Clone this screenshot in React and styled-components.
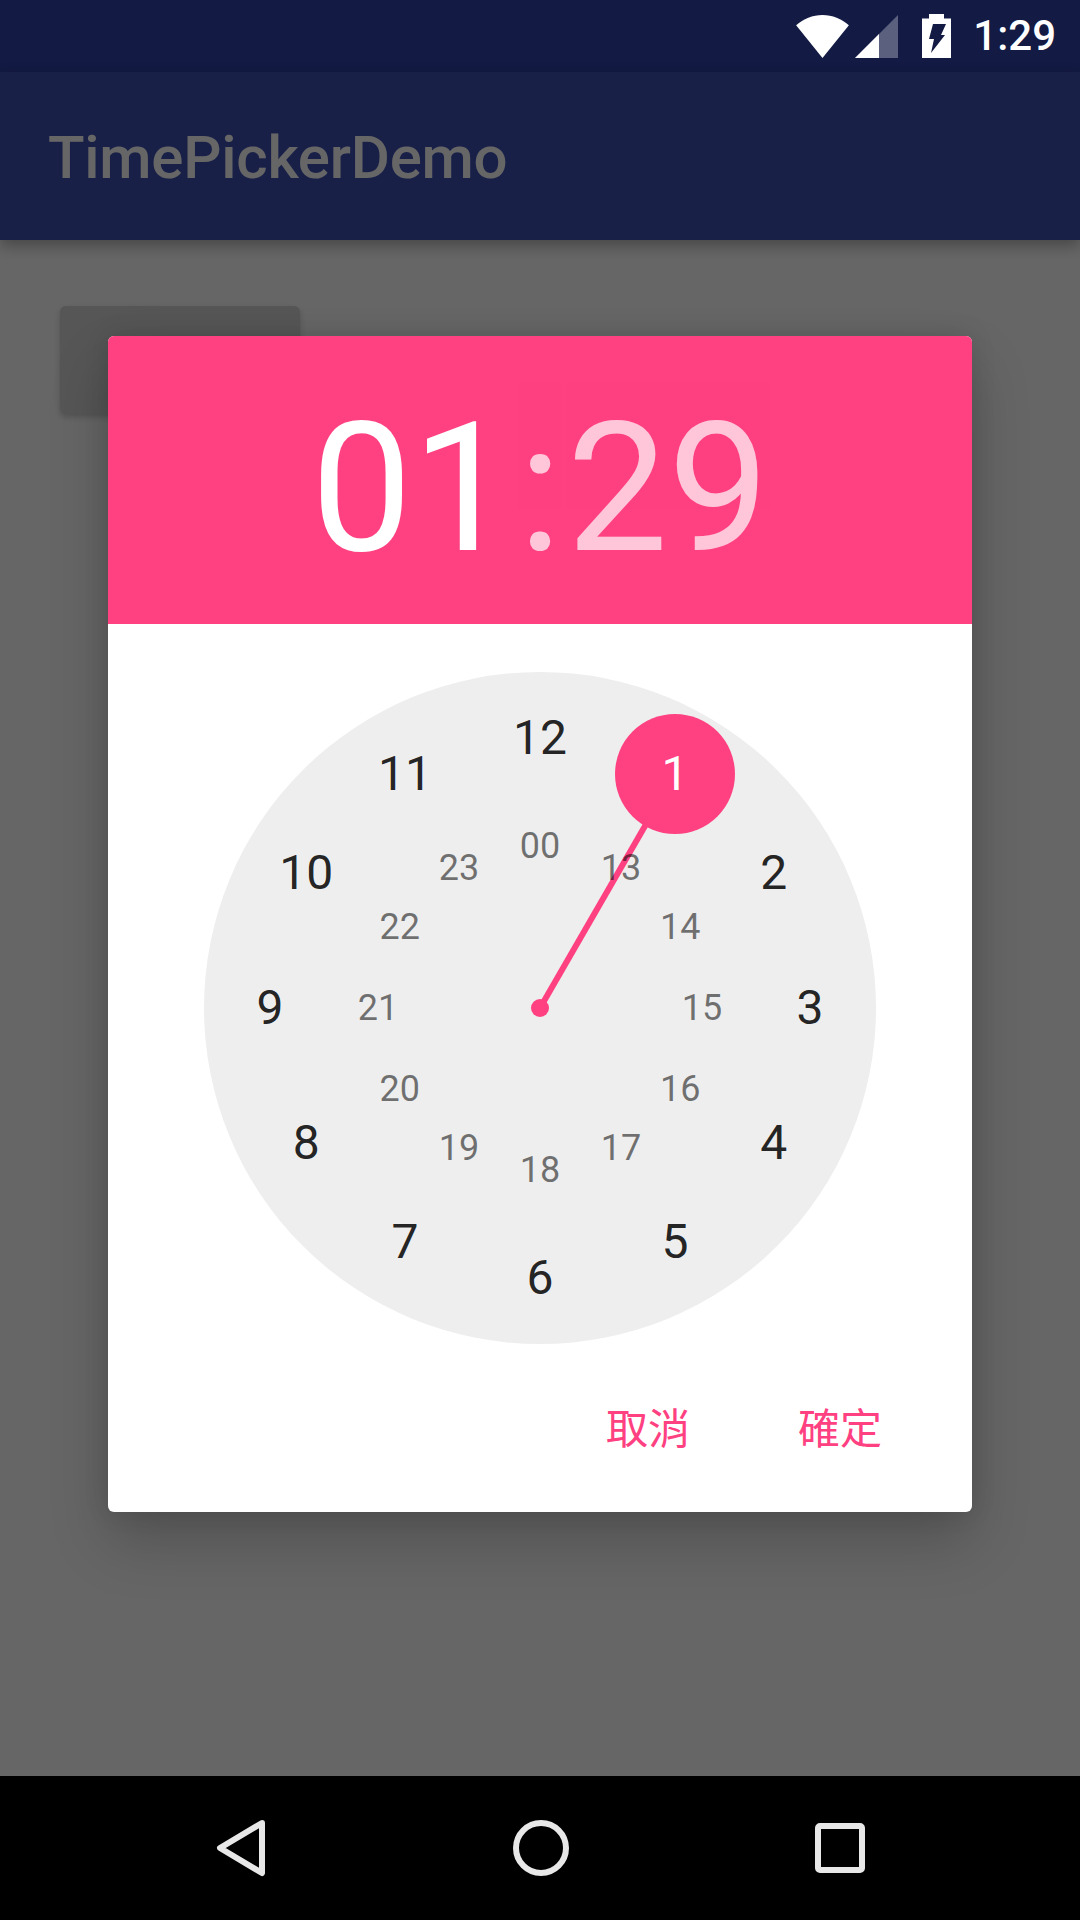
import styled, { createGlobalStyle } from "styled-components";

const PINK = "#ff4081";
const DIAL_SIZE = 672;
const CENTER = DIAL_SIZE / 2;

const outerHours = [12, 1, 2, 3, 4, 5, 6, 7, 8, 9, 10, 11];
const innerHours = ["00", 13, 14, 15, 16, 17, 18, 19, 20, 21, 22, 23];

// position of a number on the dial, index 0 is at twelve o'clock
const polar = (index, radius) => {
  const angle = (index * Math.PI) / 6;
  return {
    left: CENTER + radius * Math.sin(angle),
    top: CENTER - radius * Math.cos(angle),
  };
};

const GlobalStyle = createGlobalStyle`
  html, body {
    margin: 0;
    padding: 0;
    background: #000;
  }
  * {
    box-sizing: border-box;
  }
`;

const Screen = styled.div`
  width: 1080px;
  height: 1920px;
  display: flex;
  flex-direction: column;
  overflow: hidden;
  font-family: Roboto, "Noto Sans CJK TC", sans-serif;
`;

const StatusBar = styled.div`
  height: 72px;
  flex: none;
  display: flex;
  align-items: center;
  justify-content: flex-end;
  padding-right: 24px;
  background: #131a43;
  color: #fff;
`;

const StatusTime = styled.span`
  font-size: 42px;
  font-weight: 500;
  line-height: 1;
  margin-left: 22px;
  margin-top: -1px;
`;

const StatusIcon = styled.svg`
  display: block;
  flex: none;
  margin-left: ${(p) => p.$gap || 0}px;
`;

const Main = styled.div`
  position: relative;
  flex: 1;
  display: flex;
  flex-direction: column;
  background: #fff;
`;

const AppBar = styled.header`
  height: 168px;
  flex: none;
  display: flex;
  align-items: center;
  padding: 2px 0 0 48px;
  background: #3f51b5;
  color: #fff;
  font-size: 60px;
  font-weight: 500;
  letter-spacing: -0.25px;
  box-shadow: 0 6px 14px rgba(0, 0, 0, 0.3);
`;

const Content = styled.div`
  flex: 1;
  padding: 66px 60px;
`;

const GhostButton = styled.div`
  width: 240px;
  height: 108px;
  border-radius: 6px;
  background: #d6d6d6;
  box-shadow: 0 3px 6px rgba(0, 0, 0, 0.2);
`;

const Scrim = styled.div`
  position: absolute;
  inset: 0;
  display: flex;
  align-items: center;
  justify-content: center;
  background: rgba(0, 0, 0, 0.6);
`;

const Dialog = styled.div`
  width: 864px;
  height: 1176px;
  border-radius: 6px;
  overflow: hidden;
  background: #fff;
  box-shadow: 0 30px 60px rgba(0, 0, 0, 0.2), 0 0 24px rgba(0, 0, 0, 0.12);
  display: flex;
  flex-direction: column;
`;

const Header = styled.div`
  height: 288px;
  flex: none;
  display: flex;
  align-items: center;
  justify-content: center;
  padding-top: 17px;
  background: ${PINK};
  color: #fff;
  font-size: 180px;
  line-height: 1;
`;

const TimePart = styled.span`
  opacity: ${(p) => (p.$active ? 1 : 0.7)};
`;

const Colon = styled(TimePart)`
  margin: 0 5px;
`;

const DialWrap = styled.div`
  flex: none;
  display: flex;
  justify-content: center;
  padding-top: 48px;
`;

const Dial = styled.div`
  position: relative;
  width: ${DIAL_SIZE}px;
  height: ${DIAL_SIZE}px;
  border-radius: 50%;
  background: #eee;
`;

const Hand = styled.svg`
  position: absolute;
  inset: 0;
`;

const Num = styled.span`
  position: absolute;
  transform: translate(-50%, -50%);
  line-height: 1;
  font-size: ${(p) => (p.$inner ? 36 : 48)}px;
  color: ${(p) =>
    p.$selected ? "#fff" : p.$inner ? "rgba(0, 0, 0, 0.54)" : "rgba(0, 0, 0, 0.87)"};
`;

const Actions = styled.div`
  flex: 1;
  display: flex;
  align-items: center;
  justify-content: flex-end;
  gap: 108px;
  padding: 4px 90px 0 0;
`;

const ActionText = styled.span`
  color: ${PINK};
  font-size: 42px;
  line-height: 1;
`;

const NavBar = styled.nav`
  height: 144px;
  flex: none;
  display: flex;
  align-items: center;
  justify-content: space-between;
  padding: 0 215px 0 216px;
  background: #000;
`;

const NavIcon = styled.svg`
  display: block;
  fill: none;
  stroke: #e8e8e8;
  stroke-width: 6;
  stroke-linejoin: round;
`;

const App = () => {
  return (
    <Screen>
      <GlobalStyle />
      <StatusBar>
        <StatusIcon width="53" height="43" viewBox="0 0 54 44">
          <path d="M0 10.5C7.5 3.8 16.8 0 27 0s19.500 3.800 27 10.500L27 44z" fill="#fff" />
        </StatusIcon>
        <StatusIcon $gap={6} width="43" height="43" viewBox="0 0 43 43">
          <path d="M0 43L43 0v43z" fill="#5c607f" />
          <path d="M0 43L24 19v24z" fill="#fff" />
        </StatusIcon>
        <StatusIcon $gap={24} width="29" height="44" viewBox="0 0 29 44">
          <path
            d="M7 0h15v4.500h7V44H0V4.500h7z"
            fill="#fff"
          />
          <path d="M11 10h13l-5 11h4L9 39l3-14H7z" fill="#131a43" />
        </StatusIcon>
        <StatusTime>1:29</StatusTime>
      </StatusBar>

      <Main>
        <AppBar>TimePickerDemo</AppBar>
        <Content>
          <GhostButton />
        </Content>

        <Scrim>
          <Dialog>
            <Header>
              <TimePart $active>01</TimePart>
              <Colon>:</Colon>
              <TimePart>29</TimePart>
            </Header>

            <DialWrap>
              <Dial>
                <Hand width={DIAL_SIZE} height={DIAL_SIZE}>
                  <line x1={CENTER} y1={CENTER} x2="471" y2="102" stroke={PINK} strokeWidth="6" />
                  <circle cx={CENTER} cy={CENTER} r="9" fill={PINK} />
                  <circle cx="471" cy="102" r="60" fill={PINK} />
                </Hand>
                {outerHours.map((hour, i) => (
                  <Num key={hour} $selected={hour === 1} style={polar(i, 270)}>
                    {hour}
                  </Num>
                ))}
                {innerHours.map((hour, i) => (
                  <Num key={hour} $inner style={polar(i, 162)}>
                    {hour}
                  </Num>
                ))}
              </Dial>
            </DialWrap>

            <Actions>
              <ActionText>取消</ActionText>
              <ActionText>確定</ActionText>
            </Actions>
          </Dialog>
        </Scrim>
      </Main>

      <NavBar>
        <NavIcon width="50" height="58" viewBox="0 0 50 58">
          <path d="M46 4L4 29l42 25z" />
        </NavIcon>
        <NavIcon width="56" height="56" viewBox="0 0 56 56">
          <circle cx="28" cy="28" r="25" />
        </NavIcon>
        <NavIcon width="50" height="50" viewBox="0 0 50 50">
          <rect x="3" y="3" width="44" height="44" rx="2" />
        </NavIcon>
      </NavBar>
    </Screen>
  );
};

export default App;
